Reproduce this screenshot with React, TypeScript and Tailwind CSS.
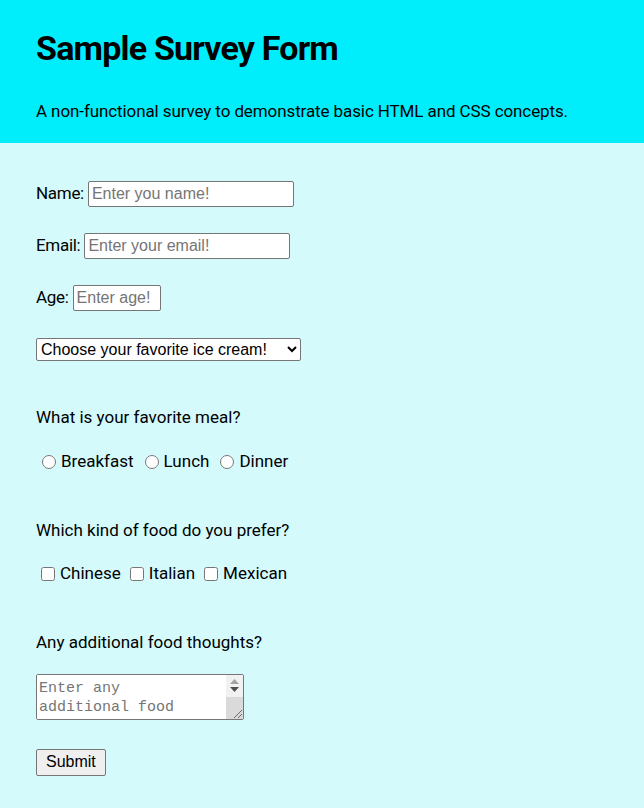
export default function App() {
  const labelFont = { fontFamily: "Roboto, 'Noto Sans', sans-serif" };
  const arial = { fontFamily: "'Liberation Sans', Arial, sans-serif" };
  return (
    <div className="min-h-[808px] bg-[#d4fafc] text-black" style={labelFont}>
      {/* Header */}
      <header className="bg-[#00eefc] px-[36px] pt-[24px] pb-[20px]">
        <h1 className="text-[34px] font-bold leading-[48px] tracking-[-0.8px]">Sample Survey Form</h1>
        <p className="mt-[27px] text-[17px] leading-[24px] tracking-[-0.1px]">
          A non-functional survey to demonstrate basic HTML and CSS concepts.
        </p>
      </header>

      <form className="px-[36px] pt-[38px] pb-[30px] text-[17px]">
        <div className="flex items-center h-[26px]">
          <label htmlFor="name" className="mr-[4px] tracking-[-0.3px]">Name:</label>
          <input
            id="name"
            type="text"
            placeholder="Enter you name!"
            className="w-[206px] h-[26px] bg-white border border-[#767676] rounded-[2px] px-[3px] text-[16px] placeholder:text-[#757575]"
            style={arial}
          />
        </div>

        <div className="flex items-center h-[26px] mt-[26px]">
          <label htmlFor="email" className="mr-[4px] tracking-[-0.3px]">Email:</label>
          <input
            id="email"
            type="email"
            placeholder="Enter your email!"
            className="w-[206px] h-[26px] bg-white border border-[#767676] rounded-[2px] px-[3px] text-[16px] placeholder:text-[#757575]"
            style={arial}
          />
        </div>

        <div className="flex items-center h-[26px] mt-[26px]">
          <label htmlFor="age" className="mr-[4px] tracking-[-0.3px]">Age:</label>
          <input
            id="age"
            type="text"
            placeholder="Enter age!"
            className="w-[88px] h-[26px] bg-white border border-[#767676] rounded-[2px] px-[3px] text-[16px] placeholder:text-[#757575]"
            style={arial}
          />
        </div>

        <div className="mt-[26px]">
          <select
            className="w-[265px] h-[23px] bg-white border border-[#767676] rounded-[2px] text-[16px]"
            style={arial}
            defaultValue="none"
          >
            <option value="none">Choose your favorite ice cream!</option>
            <option>Vanilla</option>
            <option>Chocolate</option>
            <option>Strawberry</option>
          </select>
        </div>

        <p className="mt-[42px] leading-[24px]">What is your favorite meal?</p>
        <div className="mt-[21px] flex items-center h-[24px]">
          {["Breakfast", "Lunch", "Dinner"].map((m) => (
            <label key={m} className="flex items-center mr-[5px]">
              <input type="radio" name="meal" className="ml-[6px] mr-[5px] w-[14px] h-[14px]" />
              {m}
            </label>
          ))}
        </div>

        <p className="mt-[44px] leading-[24px]">Which kind of food do you prefer?</p>
        <div className="mt-[20px] flex items-center h-[24px]">
          {["Chinese", "Italian", "Mexican"].map((f) => (
            <label key={f} className="flex items-center mr-[4px]">
              <input type="checkbox" className="ml-[5px] mr-[5px] w-[14px] h-[14px]" />
              {f}
            </label>
          ))}
        </div>

        <p className="mt-[44px] leading-[24px]">Any additional food thoughts?</p>
        {/* textarea with a drawn classic scrollbar */}
        <div className="mt-[20px] flex w-[208px] h-[46px] bg-white border border-[#767676] rounded-[2px] overflow-hidden">
          <textarea
            placeholder="Enter any additional food thoughts!"
            className="flex-1 h-full resize-none overflow-hidden bg-white pl-[2px] pr-[10px] pt-[4px] text-[15px] leading-[19px] placeholder:text-[#757575] outline-none"
            style={{ fontFamily: "'Liberation Mono', 'DejaVu Sans Mono', monospace" }}
          />
          <div className="w-[17px] flex flex-col">
            <div className="h-[22px] bg-[#f1f1f1] flex flex-col items-center justify-center gap-[3px]">
              <svg width="9" height="5" viewBox="0 0 9 5">
                <path d="M4.5 0L9 5H0z" fill="#a3a3a3" />
              </svg>
              <svg width="9" height="5" viewBox="0 0 9 5">
                <path d="M0 0H9L4.5 5z" fill="#505050" />
              </svg>
            </div>
            <div className="flex-1 bg-[#dadada] flex items-end justify-end">
              <svg width="11" height="11" viewBox="0 0 11 11">
                <path d="M10 2L2 10M10 6L6 10" stroke="#6b6b6b" strokeWidth="1" />
              </svg>
            </div>
          </div>
        </div>

        <div className="mt-[29px]">
          <button
            type="button"
            className="h-[27px] px-[9px] bg-[#efefef] border border-[#767676] rounded-[2px] text-[16px]"
            style={arial}
          >
            Submit
          </button>
        </div>
      </form>
    </div>
  );
}
